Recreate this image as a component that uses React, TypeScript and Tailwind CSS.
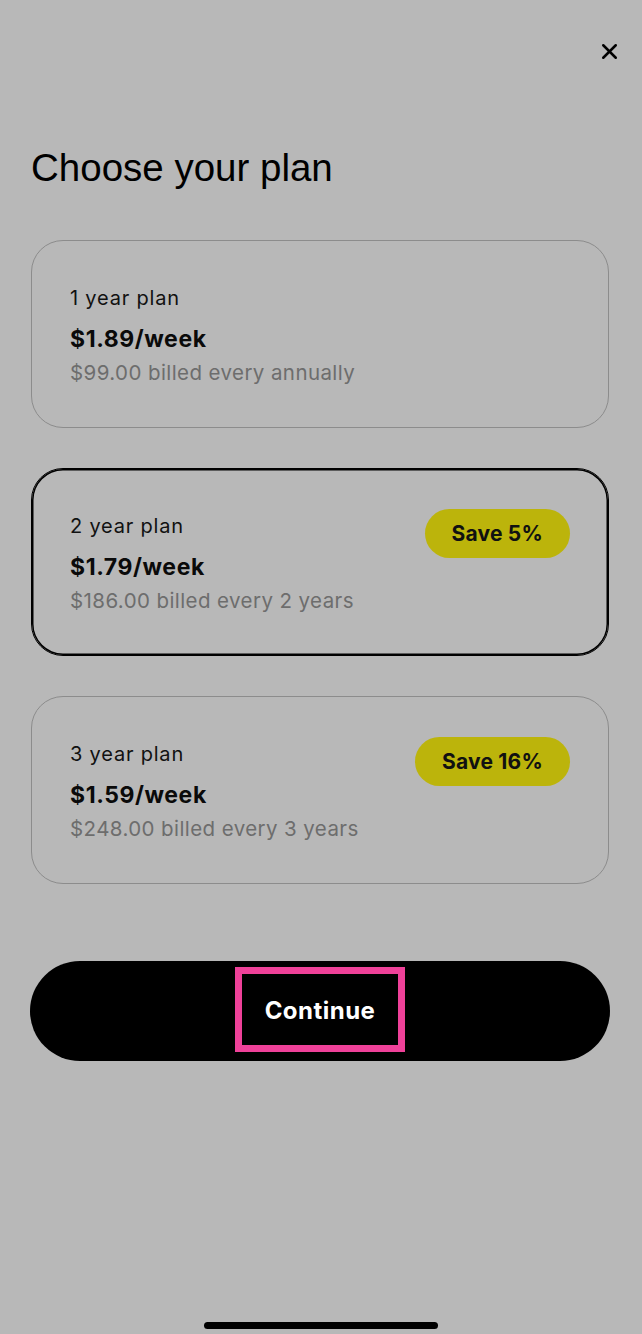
import { X } from 'lucide-react'

interface Plan {
  name: string
  price: string
  billed: string
  save?: string
  selected?: boolean
}

const plans: Plan[] = [
  { name: '1 year plan', price: '$1.89/week', billed: '$99.00 billed every annually' },
  { name: '2 year plan', price: '$1.79/week', billed: '$186.00 billed every 2 years', save: 'Save 5%', selected: true },
  { name: '3 year plan', price: '$1.59/week', billed: '$248.00 billed every 3 years', save: 'Save 16%' },
]

const PlanCard = ({ plan }: { plan: Plan }) => {
  return (
    <div
      className={`ml-[1px] h-[188px] rounded-[32px] border-[1.5px] pl-[38px] pr-[38px] pt-[45px] ${
        plan.selected ? 'border-black shadow-[inset_0_0_0_1.5px_#000]' : 'border-[#8c8c8c]'
      }`}
    >
      <div className="flex items-start justify-between">
        <div className="flex flex-col">
          <div className="text-[20px] leading-[24px] tracking-[0.04em] text-[#111]">{plan.name}</div>
          <div className="mt-[15px] text-[23px] font-bold leading-[28px] tracking-[0.025em] text-[#0a0a0a]">{plan.price}</div>
          <div className="mt-[7px] text-[20.5px] leading-[26px] tracking-[0.02em] text-[#6d6d6d]">{plan.billed}</div>
        </div>
        {plan.save && (
          <div className="-mt-[5px] flex h-[49px] items-center rounded-full bg-[#bcb40b] px-[27px] text-[21px] font-bold tracking-[0.01em] text-[#111]">
            {plan.save}
          </div>
        )}
      </div>
    </div>
  )
}

export default function App() {
  return (
    <div className="relative min-h-[1334px] w-full bg-[#b8b8b8] font-['Inter',sans-serif]">
      {/* Close */}
      <div className="flex justify-end pr-[20px] pt-[39px]">
        <X className="h-[25px] w-[25px] text-black" strokeWidth={2.4} />
      </div>

      {/* Title */}
      <h1 className="mt-[84px] pl-[31px] font-['Liberation_Sans',Arial,sans-serif] text-[38.5px] leading-[40px] text-black">
        Choose your plan
      </h1>

      {/* Plans */}
      <div className="mt-[52px] flex flex-col gap-[40px] pl-[30px] pr-[33px]">
        {plans.map((p) => (
          <PlanCard key={p.name} plan={p} />
        ))}
      </div>

      {/* Continue */}
      <div className="mt-[77px] pl-[30px] pr-[32px]">
        <button className="relative flex h-[100px] w-full items-center justify-center rounded-full bg-black text-[24px] font-bold tracking-[0.02em] text-white">
          Continue
          <span className="pointer-events-none absolute left-1/2 top-[6px] h-[85px] w-[170px] -translate-x-1/2 border-[7px] border-[#ef4199]" />
        </button>
      </div>

      {/* Home indicator */}
      <div className="absolute bottom-[5px] left-1/2 h-[7px] w-[234px] -translate-x-1/2 rounded-full bg-black" />
    </div>
  )
}
